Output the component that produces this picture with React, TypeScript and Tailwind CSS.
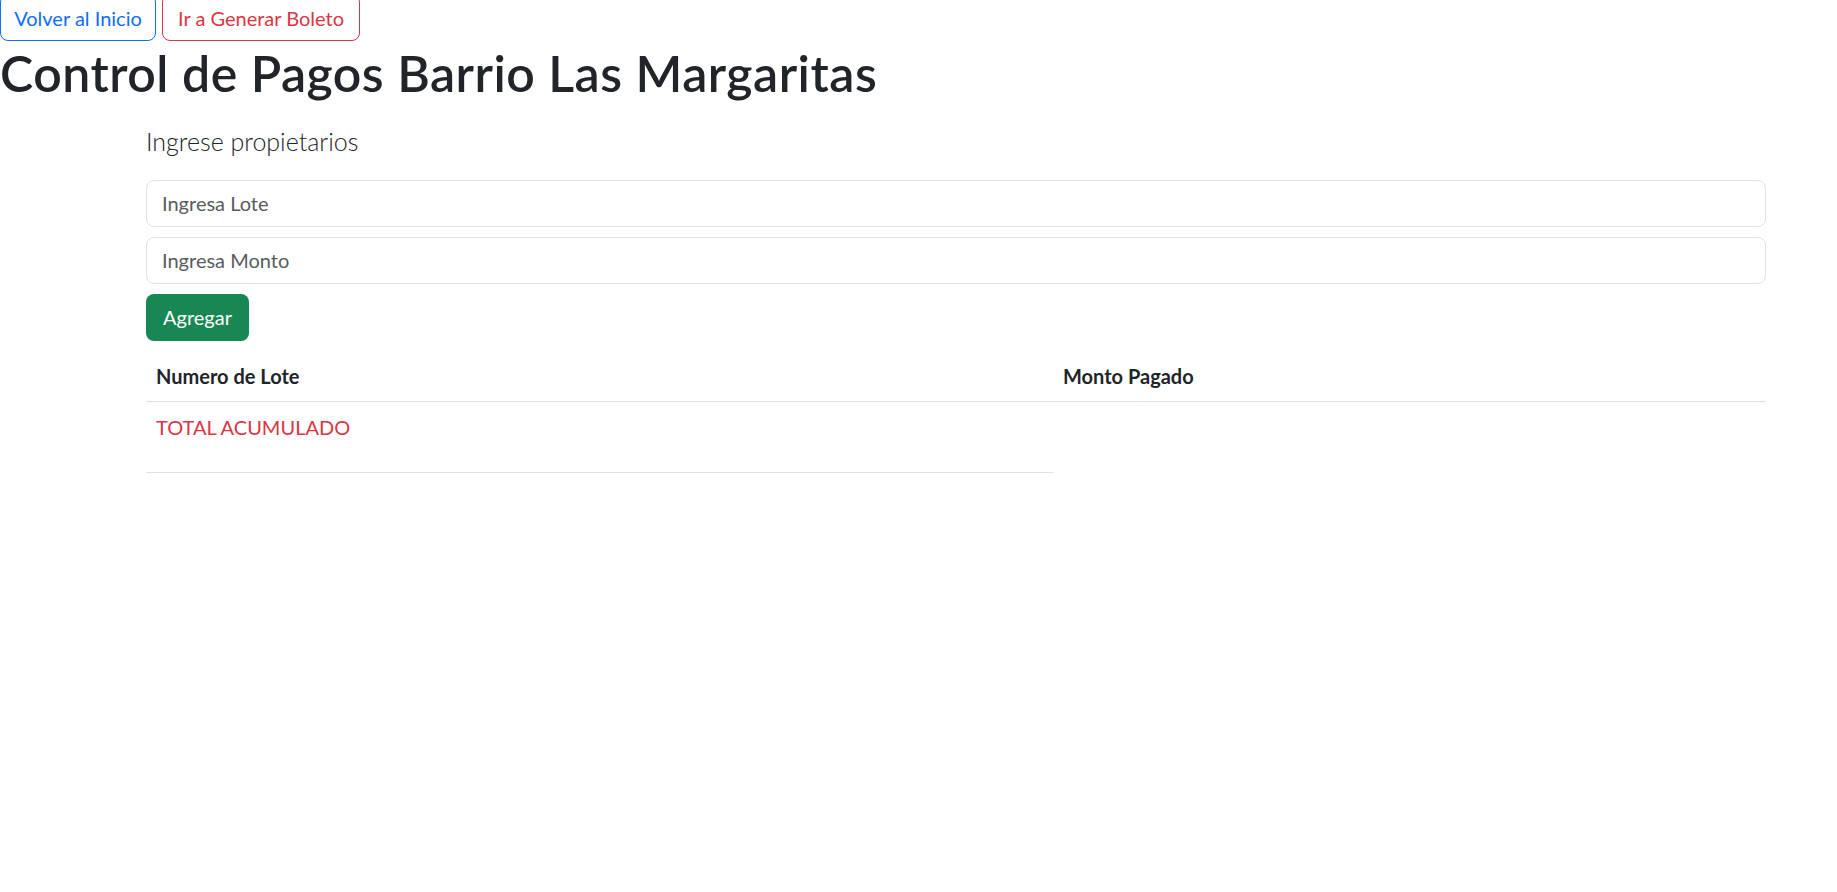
export default function App() {
  return (
    <div className="min-h-screen bg-white font-['Lato','Open_Sans',sans-serif] text-[20px] leading-[1.5] text-[#212529]">
      <div className="-mt-[6px] flex gap-[6px]">
        <button className="h-[47px] w-[156px] rounded-[8px] border border-[#0d6efd] text-[20px] text-[#0d6efd]">
          Volver al Inicio
        </button>
        <button className="h-[47px] w-[198px] rounded-[8px] border border-[#dc3545] text-[20px] text-[#dc3545]">
          Ir a Generar Boleto
        </button>
      </div>

      <h1 className="mt-[2px] text-[50px] font-semibold leading-[60px] tracking-[0.5px]">
        Control de Pagos Barrio Las Margaritas
      </h1>

      <div className="pl-[146px] pr-[71px]">
        <p className="mt-[20px] mb-[19px] text-[25px] font-light leading-[37.5px]">Ingrese propietarios</p>

        <div className="flex flex-col gap-[10px]">
          <input
            placeholder="Ingresa Lote"
            className="h-[47px] w-full rounded-[8px] border border-[#dee2e6] px-[15px] text-[20px] outline-none placeholder:text-[#595c5f]"
          />
          <input
            placeholder="Ingresa Monto"
            className="h-[47px] w-full rounded-[8px] border border-[#dee2e6] px-[15px] text-[20px] outline-none placeholder:text-[#595c5f]"
          />
          <div>
            <button className="h-[47px] w-[103px] rounded-[8px] bg-[#198754] text-[20px] text-white">Agregar</button>
          </div>
        </div>

        <div className="mt-[10px]">
          <div className="grid grid-cols-[907px_1fr] border-b border-[#dee2e6] font-bold">
            <div className="px-[10px] py-[10px] leading-[30px]">Numero de Lote</div>
            <div className="px-[10px] py-[10px] leading-[30px]">Monto Pagado</div>
          </div>
          <div className="h-[71px] w-[907px] border-b border-[#dee2e6] px-[10px] pt-[10px] leading-[30px] text-[#dc3545]">
            TOTAL ACUMULADO
          </div>
        </div>
      </div>
    </div>
  );
}
